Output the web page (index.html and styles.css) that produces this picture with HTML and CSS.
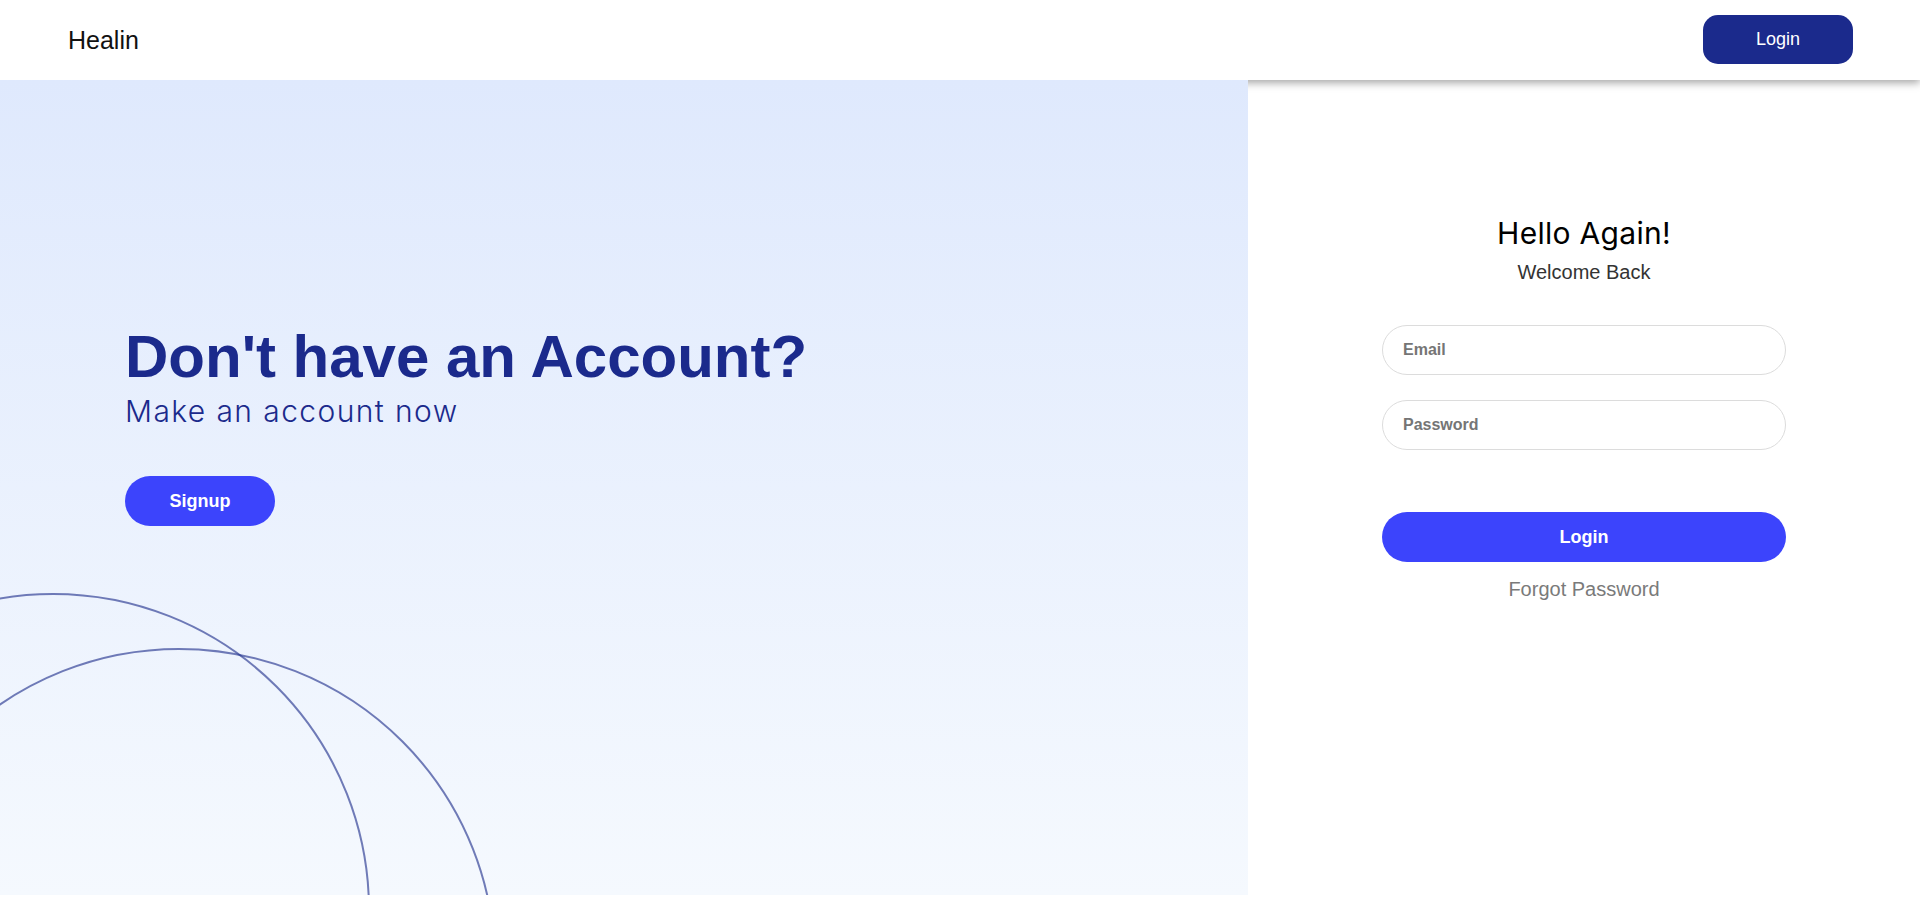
FILE: index.html
```html
<!DOCTYPE html>
<html>
<head>
  <title>Healin - Login</title>
  <link rel="stylesheet" href="styles.css">
</head>
<body>
  <header class="navbar">
    <div class="brand">Healin</div>
    <button class="nav-login">Login</button>
  </header>

  <main class="page">
    <section class="promo">
      <h1 class="promo-title">Don't have an Account?</h1>
      <p class="promo-sub">Make an account now</p>
      <button class="signup-btn">Signup</button>
      <div class="ring ring-one"></div>
      <div class="ring ring-two"></div>
    </section>

    <section class="login">
      <h2 class="login-title">Hello Again!</h2>
      <p class="login-sub">Welcome Back</p>
      <form class="login-form">
        <input class="field" type="email" placeholder="Email">
        <input class="field" type="password" placeholder="Password">
        <button class="login-btn" type="button">Login</button>
        <a class="forgot" href="#">Forgot Password</a>
      </form>
    </section>
  </main>
</body>
</html>
```

FILE: styles.css
```css
/* Reset */
body {
  margin: 0;
  font-family: "Liberation Sans", Arial, sans-serif;
  background: #fff;
}

/* Navbar */
.navbar {
  position: relative;
  z-index: 1;
  display: flex;
  align-items: center;
  justify-content: space-between;
  height: 80px;
  padding: 0 67px 0 68px;
  background: #fff;
  box-shadow: 0 3px 8px rgba(0, 0, 0, 0.35);
}

.brand {
  font-size: 25px;
  color: #111;
}

.nav-login {
  width: 150px;
  height: 49px;
  margin-top: -1px;
  border: none;
  border-radius: 15px;
  background: #1b2a8c;
  color: #fff;
  font-family: "Liberation Sans", Arial, sans-serif;
  font-size: 18px;
  cursor: pointer;
}

/* Layout */
.page {
  display: flex;
}

/* Left side */
.promo {
  position: relative;
  z-index: 2;
  box-sizing: border-box;
  width: 1248px;
  height: 815px;
  padding: 242px 0 0 125px;
  overflow: hidden;
  background: linear-gradient(180deg, #dfe9fd 0%, #f5f9fe 100%);
}

.promo-title {
  margin: 0;
  font-size: 60px;
  font-weight: bold;
  color: #1b2a8c;
}

.promo-sub {
  margin: 2px 0 0;
  font-family: Inter, "Noto Sans", sans-serif;
  font-weight: 300;
  font-size: 30px;
  letter-spacing: 1.4px;
  color: #1b2a8c;
}

.signup-btn {
  margin-top: 47px;
  width: 150px;
  height: 50px;
  border: none;
  border-radius: 25px;
  background: #3c44fc;
  color: #fff;
  font-family: "Liberation Sans", Arial, sans-serif;
  font-size: 18px;
  font-weight: bold;
  cursor: pointer;
}

.ring {
  position: absolute;
  width: 630px;
  height: 630px;
  border: 2px solid rgba(40, 55, 145, 0.65);
  border-radius: 50%;
}

.ring-one {
  left: -264px;
  top: 513px;
}

.ring-two {
  left: -138px;
  top: 568px;
}

/* Right side */
.login {
  flex: 1;
  display: flex;
  flex-direction: column;
  align-items: center;
  padding-top: 135px;
}

.login-title {
  margin: 0;
  line-height: 36px;
  font-family: Inter, "Noto Sans", sans-serif;
  font-weight: 400;
  font-size: 30px;
  letter-spacing: 0.3px;
  color: #000;
}

.login-sub {
  margin: 9px 0 0;
  line-height: 24px;
  font-size: 20px;
  color: #333;
}

.login-form {
  display: flex;
  flex-direction: column;
  align-items: center;
  width: 404px;
  margin-top: 41px;
}

.field {
  box-sizing: border-box;
  width: 100%;
  height: 50px;
  margin-bottom: 25px;
  padding: 0 20px;
  border: 1px solid #dcdcdc;
  border-radius: 25px;
  font-family: "Liberation Sans", Arial, sans-serif;
  font-size: 16px;
  font-weight: bold;
  outline: none;
}

.field::placeholder {
  color: #757575;
}

.login-btn {
  width: 100%;
  height: 50px;
  margin-top: 37px;
  border: none;
  border-radius: 25px;
  background: #3c44fc;
  color: #fff;
  font-family: "Liberation Sans", Arial, sans-serif;
  font-size: 18px;
  font-weight: bold;
  cursor: pointer;
}

.forgot {
  margin-top: 15px;
  line-height: 24px;
  font-size: 20px;
  color: #7a7a7a;
  text-decoration: none;
}
```
